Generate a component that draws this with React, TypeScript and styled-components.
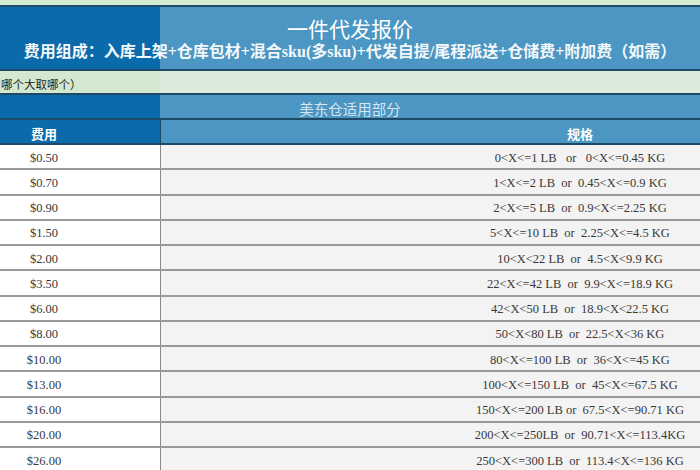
import React from "react";
import styled, { createGlobalStyle } from "styled-components";

const GlobalStyle = createGlobalStyle`
  html, body {
    margin: 0;
    padding: 0;
    background: #ffffff;
    overflow: hidden;
  }
`;

const DARK = "#0b6aa9";
const LIGHT = "#4b96c2";
const LINE = "#1d4a66";
const SPLIT = 160;
const SERIF = `"Liberation Serif", "Noto Sans CJK SC", serif`;

const rows: [string, string][] = [
  ["$0.50", "0<X<=1 LB   or   0<X<=0.45 KG"],
  ["$0.70", "1<X<=2 LB  or  0.45<X<=0.9 KG"],
  ["$0.90", "2<X<=5 LB  or  0.9<X<=2.25 KG"],
  ["$1.50", "5<X<=10 LB  or  2.25<X<=4.5 KG"],
  ["$2.00", "10<X<22 LB  or  4.5<X<9.9 KG"],
  ["$3.50", "22<X<=42 LB  or  9.9<X<=18.9 KG"],
  ["$6.00", "42<X<50 LB  or  18.9<X<22.5 KG"],
  ["$8.00", "50<X<80 LB  or  22.5<X<36 KG"],
  ["$10.00", "80<X<=100 LB  or  36<X<=45 KG"],
  ["$13.00", "100<X<=150 LB  or  45<X<=67.5 KG"],
  ["$16.00", "150<X<=200 LB or  67.5<X<=90.71 KG"],
  ["$20.00", "200<X<=250LB  or  90.71<X<=113.4KG"],
  ["$26.00", "250<X<=300 LB  or  113.4<X<=136 KG"],
];

const Sheet = styled.div`
  width: 700px;
  height: 470px;
  overflow: hidden;
  font-family: "Noto Sans CJK SC", sans-serif;
`;

const TopStrip = styled.div`
  height: 5px;
  background: #d3ead3;
  border-bottom: 2px solid ${LINE};
`;

const Band = styled.div<{ $h: number; $dark: string; $light: string }>`
  height: ${(p) => p.$h}px;
  box-sizing: content-box;
  background: linear-gradient(
    to right,
    ${(p) => p.$dark} 0,
    ${(p) => p.$dark} ${SPLIT}px,
    ${(p) => p.$light} ${SPLIT}px,
    ${(p) => p.$light} 100%
  );
  border-bottom: 2px solid ${LINE};
  display: flex;
  flex-direction: column;
  align-items: center;
  justify-content: center;
`;

const TitleBand = styled(Band)`
  justify-content: flex-start;
`;

const Title = styled.div`
  margin-top: 12px;
  font-family: ${SERIF};
  font-size: 21px;
  line-height: 22px;
  color: #ffffff;
`;

const Subtitle = styled.div`
  margin-top: 2px;
  font-family: ${SERIF};
  font-size: 16px;
  line-height: 18px;
  font-weight: bold;
  color: #f4f8fb;
  white-space: nowrap;
`;

const NoteBand = styled(Band)`
  align-items: flex-start;
`;

const Note = styled.div`
  padding: 3px 0 0 1px;
  font-size: 11.5px;
  color: #1a1a1a;
`;

const Section = styled.div`
  padding-top: 4px;
  font-size: 14.5px;
  color: #d6e6f0;
`;

const Table = styled.div`
  width: 999px;
`;

const Row = styled.div<{ $head?: boolean }>`
  display: grid;
  grid-template-columns: 161px 1fr;
  height: ${(p) => (p.$head ? 23 : 23.25)}px;
  border-bottom: 2px solid ${(p) => (p.$head ? LINE : "#9a9a9a")};
`;

const Cell = styled.div<{ $head?: boolean; $left?: boolean }>`
  display: flex;
  align-items: center;
  justify-content: center;
  box-sizing: border-box;
  white-space: pre;
  padding-top: 3px;
  padding-right: ${(p) => (p.$left ? 72 : 0)}px;
  background: ${(p) =>
    p.$head ? (p.$left ? DARK : LIGHT) : p.$left ? "#ffffff" : "#f3f3f3"};
  border-right: ${(p) =>
    p.$left ? `1px solid ${p.$head ? LINE : "#8a8a8a"}` : "none"};
  color: ${(p) => (p.$head ? "#ffffff" : "#383838")};
  font-family: ${(p) => (p.$head ? `"Noto Sans CJK SC", sans-serif` : SERIF)};
  font-size: ${(p) => (p.$head ? 13 : 12.5)}px;
  font-weight: ${(p) => (p.$head ? "bold" : "normal")};
`;

export default function App() {
  return (
    <Sheet>
      <GlobalStyle />
      <TopStrip />
      <TitleBand $h={62} $dark={DARK} $light={LIGHT}>
        <Title>一件代发报价</Title>
        <Subtitle>
          费用组成：入库上架+仓库包材+混合sku(多sku)+代发自提/尾程派送+仓储费+附加费（如需）
        </Subtitle>
      </TitleBand>
      <NoteBand $h={22} $dark="#d3e8cf" $light="#dbeada">
        <Note>哪个大取哪个）</Note>
      </NoteBand>
      <Band $h={23} $dark={DARK} $light={LIGHT}>
        <Section>美东仓适用部分</Section>
      </Band>
      <Table>
        <Row $head>
          <Cell $head $left>
            费用
          </Cell>
          <Cell $head>规格</Cell>
        </Row>
        {rows.map(([fee, spec]) => (
          <Row key={fee}>
            <Cell $left>{fee}</Cell>
            <Cell>{spec}</Cell>
          </Row>
        ))}
      </Table>
    </Sheet>
  );
}
